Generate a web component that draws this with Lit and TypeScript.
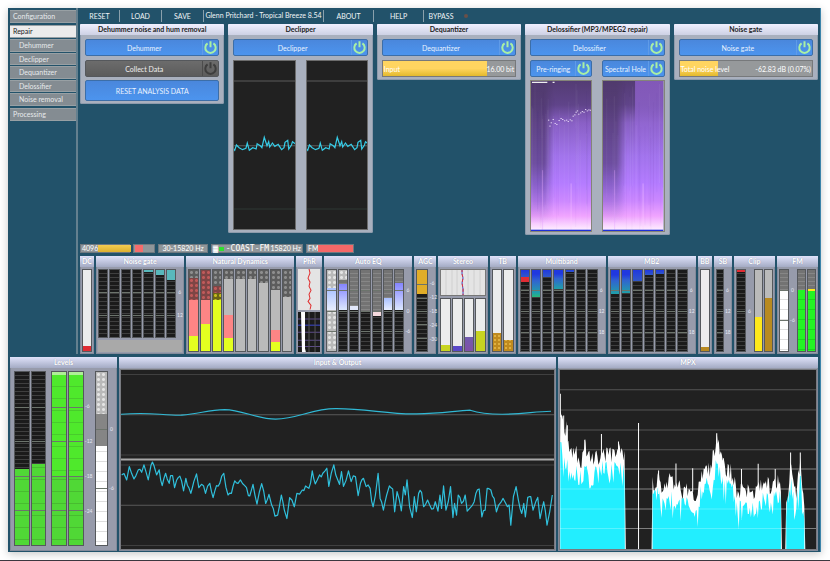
import { LitElement, html, svg, css, nothing } from "lit";
import { customElement, property } from "lit/decorators.js";
import { classMap } from "lit/directives/class-map.js";
import { styleMap } from "lit/directives/style-map.js";

type Seg = [kind: string, until: number];
type Pt = [number, number];

/** A column: base fill plus segments stacked from the top, each ending at a percentage. */
interface Column { base: string; segs?: Seg[]; grow?: number; gap?: boolean }

const line = (pts: Pt[]) => pts.map((p) => p.map((n) => Math.round(n * 10) / 10).join(",")).join(" ");

/** Small deterministic generator, so that the traces are stable between renders. */
function random(seed: number) {
  let s = seed;
  return () => {
    s = (s * 1664525 + 1013904223) % 4294967296;
    return s / 4294967296;
  };
}

@customElement("power-button")
class PowerButton extends LitElement {
  @property() label = "";
  @property({ type: Boolean }) off = false;
  static styles = css`
    :host { display: block; flex: 1; min-width: 0; }
    button {
      display: flex; align-items: center; width: 100%; height: 17px; padding: 0;
      border: 1px solid #3c6ea8; border-radius: 2px;
      background: linear-gradient(#4a87dc, #4c94ee);
      color: #e8f2ff; font: 7px Lato, sans-serif;
    }
    button.off { background: linear-gradient(#6c6c6c, #5c5c5c); border-color: #55585c; color: #f0f0f0; }
    .label { flex: 1; text-align: center; white-space: nowrap; }
    .icon { width: 15px; height: 15px; flex: none; border-left: 1px solid #5f9be8; color: #a9f0a4; }
    .off .icon { color: #3e3e3e; border-color: #4c4c4c; }
  `;
  render() {
    return html`<button class=${classMap({ off: this.off })} aria-pressed=${this.off ? "false" : "true"}>
      <span class="label">${this.label}</span>
      <svg class="icon" viewBox="0 0 15 15" fill="none" stroke="currentColor" stroke-width="2" aria-hidden="true">
        <path d="M4.6 3.4A5.2 5.2 0 1 0 10.4 3.4M7.5 1.2V7.2" />
      </svg>
    </button>`;
  }
}

@customElement("tool-panel")
class ToolPanel extends LitElement {
  @property() heading = "";
  static styles = css`
    :host { display: block; min-width: 0; background: #a9b0be; border-radius: 2px; box-shadow: inset 0 0 0 1px #8d9bac; }
    h2 {
      margin: 0; height: 11px; font: bold 7px/11px "Noto Sans", sans-serif; color: #1c1c22;
      font-family: Lato, sans-serif;
      text-align: center; white-space: nowrap; overflow: hidden;
      background: linear-gradient(#f0f0ff, #cdd1e4); border-radius: 1px 1px 0 0;
    }
    .body { display: flex; flex-direction: column; gap: 3px; padding: 4px 5px 3px; }
  `;
  render() {
    return html`<h2>${this.heading}</h2><div class="body"><slot></slot></div>`;
  }
}

@customElement("value-bar")
class ValueBar extends LitElement {
  @property() label = "";
  @property() value = "";
  @property({ type: Number }) level = 0;
  static styles = css`
    :host { display: block; margin-top: 1px; }
    .bar {
      display: flex; align-items: center; justify-content: space-between; height: 15px; padding: 0 1px;
      border: 1px solid #77797b; background: #96999b; position: relative;
      color: #fff; font: 7px Lato, sans-serif;
    }
    .fill { position: absolute; left: 0; top: 0; bottom: 0; background: linear-gradient(#ffd560 50%, #e3b92d); }
    span { position: relative; white-space: nowrap; }
  `;
  render() {
    return html`<div class="bar" role="meter" aria-label=${this.label} aria-valuenow=${this.level}>
      <div class="fill" style=${styleMap({ width: `${this.level}%` })}></div>
      <span>${this.label}</span><span>${this.value}</span>
    </div>`;
  }
}

@customElement("meter-columns")
class MeterColumns extends LitElement {
  @property({ attribute: false }) columns: Column[] = [];
  @property({ attribute: false }) marks: [string, number][] = [];
  static styles = css`
    :host { display: flex; flex: 1; gap: 1px; min-width: 0; min-height: 0; }
    .col {
      flex: 1 1 0; min-width: 0; display: flex; flex-direction: column; position: relative;
      border: 1px solid #55585c; overflow: hidden;
    }
    .col.gap { margin-right: 4px; }
    .seg { flex: none; }
    .dark { background: repeating-linear-gradient(#1b1b1b 0 3px, #3f3f3f 3px 4px); }
    .ticks { background: repeating-linear-gradient(#737373 0 3px, #868686 3px 4px); }
    .light { background: #ececec; }
    .plain { background: #bababa; }
    .mid { background: #858585; }
    .white { background: repeating-linear-gradient(#fff 0 9px, #dedede 9px 10px); }
    .dots { background: #5d5d5d radial-gradient(circle, #8e8e8e 1px, #8e8e8e00 2px) 0 0 / 5px 5px; }
    .palesdots { background: #b9b9b9 radial-gradient(circle, #e4e4e4 1px, #e4e4e400 2px) 0 0 / 5px 5px; }
    .reddots { background: #7e4545 radial-gradient(circle, #c05a5a 1px, #c05a5a00 2px) 0 0 / 5px 5px; }
    .yellowdots { background: #6a6416 radial-gradient(circle, #c4bb20 1px, #c4bb2000 2px) 0 0 / 5px 5px; }
    .pink { background: #fd8585; }
    .yellow { background: #e4ff20; }
    .gold { background: #e0ad28; }
    .sun { background: #ffe81c; }
    .brown { background: #b88a20; }
    .amber { background: #c08a1e radial-gradient(circle, #e0b040 0 1px, #e0b04000 1px) 0 0 / 4px 4px; }
    .olive { background: #c8d420; }
    .violet { background: #5a48c8; }
    .indigo { background: linear-gradient(#4a78c0, #8050a8); }
    .sky { background: linear-gradient(#a8c0ff, #e8eeff); }
    .lilac { background: linear-gradient(#8484ff, #dce8ff); }
    .ice { background: #e2e8fb; }
    .rose { background: #f4d8dc; }
    .blue { background: linear-gradient(#2038e0, #3058c8); }
    .deep { background: linear-gradient(#2038e0 20%, #3064d0 45%, #20a0a8); }
    .sea { background: linear-gradient(#2038e0 15%, #3064d0 40%, #20a0a8 85%, #28b878); }
    .teal { background: #58b8bc; }
    .red { background: #e02c34; }
    .neon { background: repeating-linear-gradient(#24f424 0 9px, #18d818 9px 10px); }
    .green { background: repeating-linear-gradient(#4fe92c 0 11px, #48cc2c 11px 12px); }
    .greenlow { background: repeating-linear-gradient(#50d836 0 11px, #48bc30 11px 12px); }
    .cap { background: #b0ee98; }
    .mark { position: absolute; left: 0; right: 0; height: 1px; background: #6c746c; }
    .scale { flex: none; width: 5px; position: relative; color: #e6e8f4; font: 5px/6px Lato, sans-serif; text-align: center; }
    .scale span { position: absolute; left: 0; right: 0; transform: translateY(-50%); }
  `;
  render() {
    return html`${this.columns.map((c) => {
      let top = 0;
      return html`<div class=${"col " + c.base + (c.gap ? " gap" : "")} style=${c.grow ? styleMap({ flexGrow: c.grow }) : nothing}>
        ${(c.segs ?? []).map(([kind, until]) => {
          const height = `${until - top}%`;
          top = until;
          return html`<div class=${"seg " + kind} style=${styleMap({ height })}></div>`;
        })}
        ${this.marks.map(([, at]) => html`<div class="mark" style=${styleMap({ top: `${at}%` })}></div>`)}
      </div>`;
    })}
    ${this.marks.length
      ? html`<div class="scale">${this.marks.map(([t, at]) => html`<span style=${styleMap({ top: `${at}%` })}>${t}</span>`)}</div>`
      : nothing}`;
  }
}

@customElement("meter-panel")
class MeterPanel extends LitElement {
  @property() heading = "";
  static styles = css`
    :host { display: flex; flex-direction: column; min-width: 0; background: #979bab; box-shadow: inset 0 0 0 1px #838a9a; }
    h2 {
      margin: 0; height: 11px; flex: none; font: bold 7px/11px Lato, sans-serif; color: #fff; text-align: center;
      white-space: nowrap; overflow: hidden; text-shadow: 0 0 1px #8088a0;
      background: linear-gradient(#dfe2fa, #a4abc4);
    }
    .body { display: flex; flex: 1; flex-direction: column; gap: 2px; padding: 2px; min-height: 0; }
  `;
  render() {
    return html`<h2>${this.heading}</h2><div class="body"><slot></slot></div>`;
  }
}

const dark: Column = { base: "dark" };
const gateColumns: Column[] = [
  dark, dark, dark, dark,
  { base: "dark", segs: [["teal", 3]] },
  { base: "dark", segs: [["teal", 7]] },
  { base: "dark", segs: [["teal", 15]] },
];
const dynamicsColumns: Column[] = [
  { base: "yellow", segs: [["dots", 10], ["reddots", 37], ["pink", 81]] },
  { base: "yellow", segs: [["reddots", 37], ["pink", 67]] },
  { base: "yellow", segs: [["dots", 20], ["reddots", 28], ["yellowdots", 37]] },
  { base: "yellow", segs: [["dots", 11], ["plain", 56], ["pink", 84]] },
  { base: "plain", segs: [["dots", 11]] },
  { base: "plain", segs: [["dots", 11]] },
  { base: "plain", segs: [["dots", 16]] },
  { base: "yellow", segs: [["dots", 25], ["plain", 74], ["pink", 89]] },
  { base: "plain", segs: [["dots", 33]] },
];
const eqColumns: Column[] = [
  { base: "palesdots", segs: [["palesdots", 22], ["sky", 50]] },
  { base: "dark", segs: [["palesdots", 12], ["ticks", 17], ["lilac", 50]] },
  { base: "dark", segs: [["ticks", 45], ["ice", 50]] },
  { base: "dark", segs: [["ticks", 50], ["light", 52]] },
  { base: "dark", segs: [["ticks", 50], ["rose", 57]] },
  { base: "dark", segs: [["ticks", 35], ["sky", 50]] },
  { base: "dark", segs: [["ticks", 16], ["lilac", 50]] },
];
const stereoColumns: Column[] = [
  { base: "olive", segs: [["light", 89]] },
  { base: "violet", segs: [["light", 90]] },
  { base: "indigo", segs: [["light", 73]] },
  { base: "olive", segs: [["light", 61]] },
];
const multibandColumns: Column[] = [
  { base: "dark", segs: [["blue", 9], ["red", 15]] },
  { base: "dark", segs: [["sea", 33]] },
  { base: "dark", segs: [["blue", 9]] },
  { base: "dark", segs: [["deep", 23]] },
  { base: "dark", segs: [["blue", 3]] },
  dark, dark,
];
const mb2Columns: Column[] = [
  { base: "dark", segs: [["deep", 30]] },
  { base: "dark", segs: [["deep", 28]] },
  { base: "dark", segs: [["blue", 13]] },
  { base: "dark", segs: [["blue", 6]] },
  { base: "dark", segs: [["blue", 5]] },
  dark, dark,
];
const clipMain: Column[] = [{ base: "dark", segs: [["red", 3]] }];
const clipSide: Column[] = [
  { base: "sun", segs: [["plain", 58]] },
  { base: "brown", segs: [["plain", 34]] },
];
const fmMain: Column[] = [{ base: "white", segs: [["ticks", 25]] }];
const fmSide: Column[] = [
  { base: "neon", segs: [["ticks", 25]] },
  { base: "neon", segs: [["ticks", 23], ["sun", 26]] },
];
const levelColumns: Column[] = [
  { base: "greenlow", segs: [["dark", 56]] },
  { base: "greenlow", segs: [["dark", 53]], gap: true },
  { base: "greenlow", segs: [["cap", 2], ["green", 60]] },
  { base: "greenlow", segs: [["cap", 2], ["green", 60]] },
];
const outColumns: Column[] = [{ base: "white", segs: [["palesdots", 24], ["mid", 43]] }];

/* Trace of the declipper scope, box spans x 42-225 and y -195-315. */
const clipTrace: Pt[] = [
  [42, 70], [47, 76], [52, 60], [60, 68], [70, 74], [80, 70], [84, 54], [90, 76], [100, 68], [110, 72], [113, 56],
  [122, 62], [127, 68], [134, 37], [142, 62], [147, 50], [150, 66], [158, 54], [165, 64], [175, 58], [185, 74],
  [192, 68], [195, 52], [203, 46], [206, 72], [214, 60], [217, 50], [225, 56],
];

const inputPath =
  "M121 413 Q140 411.5 160 413 T182 413.8 C200 412.6 208 408.6 225 408.4 C242 408.6 258 417.8 276 417.8 " +
  "C298 417.8 312 407.4 336 407.4 C366 407.2 386 412.6 414 412.6 C440 413 455 409.6 471 409 " +
  "C480 412 490 413 503 413 C525 413 535 410.2 552 410";

const outA: Pt[] = [
  [365, 370], [372, 366], [380, 385], [388, 345], [395, 366], [402, 382], [408, 372], [415, 355], [425, 362], [432, 340],
  [438, 360], [445, 385], [453, 342], [462, 342], [470, 370], [478, 355], [487, 402], [497, 365], [502, 382], [508, 395],
  [512, 372], [518, 372], [524, 408], [530, 386], [535, 378], [545, 388], [551, 418], [558, 380], [567, 408], [573, 425],
  [582, 390], [590, 367], [597, 408], [605, 398], [617, 425], [630, 395], [640, 438], [650, 402], [660, 395], [672, 365],
  [685, 430], [695, 425], [705, 388], [715, 395], [722, 385], [735, 402], [746, 432],
];
const outB: Pt[] = [
  [0, 433], [10, 398], [22, 457], [36, 396], [48, 455], [58, 428], [66, 460], [76, 493], [84, 490], [95, 430], [104, 475],
  [112, 500], [120, 438], [134, 465], [142, 425], [158, 415], [168, 403], [178, 410], [188, 358], [197, 397], [203, 385],
  [210, 370], [220, 365], [232, 350], [238, 404], [253, 340], [265, 385], [270, 398], [276, 360], [282, 404], [297, 358],
  [305, 390], [318, 375], [326, 432], [333, 395], [342, 380], [350, 405], [362, 410], [371, 465], [378, 430], [386, 365],
  [392, 440], [402, 475], [412, 430], [420, 403], [430, 412], [436, 480], [443, 420], [450, 445], [456, 477], [463, 405],
  [468, 430], [473, 385], [481, 465], [489, 497], [495, 435], [501, 480], [508, 425], [517, 422], [523, 465], [535, 445],
  [547, 472], [558, 450], [566, 478], [572, 430], [577, 470], [583, 403], [590, 475], [597, 450], [604, 405], [611, 497],
  [616, 455], [622, 490], [627, 430], [637, 455], [648, 430], [654, 478], [670, 460], [680, 425], [690, 412], [698, 495],
  [708, 475], [714, 410], [725, 415], [735, 440], [742, 480], [755, 452], [762, 440], [770, 455], [780, 460], [785, 520],
  [793, 435], [801, 405], [808, 445], [818, 485], [824, 455], [829, 495], [836, 437], [845, 435], [852, 475], [860, 450],
  [866, 437], [873, 500], [884, 450], [894, 520], [902, 480], [910, 430],
];

/** Adds a jittered point in the wider steps of a trace. */
function roughen(pts: Pt[], amount: number): Pt[] {
  const rnd = random(19);
  return pts.flatMap((p, i): Pt[] => {
    const n = pts[i + 1];
    if (!n || n[0] - p[0] < 3) return [p];
    return [p, [(p[0] + n[0]) / 2, (p[1] + n[1]) / 2 + (rnd() - 0.5) * amount]];
  });
}
const outTrace = roughen([
  ...outA.map(([x, y]): Pt => [x / 3, 350 + y / 3]),
  ...outB.map(([x, y]): Pt => [250 + x / 3, 350 + y / 3]),
], 7);

/* Spectrum bands: x, mean peak, mean average level. */
const bands: [number, number, number][][] = [
  [[64, 150, 250], [70, 210, 320], [82, 235, 330], [92, 300, 365], [102, 300, 365], [114, 308, 370], [126, 340, 378],
   [137, 280, 350], [150, 322, 385], [165, 318, 372], [180, 315, 368], [192, 305, 352], [215, 308, 355], [238, 295, 355], [257, 310, 362]],
  [[340, 398, 425], [350, 402, 430], [358, 380, 425], [372, 412, 465], [390, 385, 435], [410, 392, 445], [430, 420, 460],
   [450, 408, 445], [470, 440, 495], [482, 392, 435], [496, 360, 402], [512, 356, 408], [525, 300, 365], [532, 258, 325],
   [541, 300, 360], [555, 352, 412], [572, 355, 388], [584, 385, 436], [596, 440, 484], [608, 392, 442], [630, 428, 472],
   [650, 412, 462], [675, 388, 440], [695, 408, 455], [710, 384, 432], [724, 400, 440]],
  [[740, 460, 480], [747, 400, 430], [753, 320, 375], [758, 380, 430], [768, 430, 470], [776, 380, 420], [782, 320, 370],
   [788, 390, 430], [794, 450, 490]],
];
const spikes: Pt[] = [[64, 128], [74, 193], [85, 222], [137, 265], [187, 248], [238, 270], [298, 215], [358, 357], [410, 336],
  [460, 350], [532, 246], [552, 320], [606, 352], [656, 337], [707, 352], [753, 303], [782, 303]];

function spectrum() {
  const rnd = random(41);
  return bands.map((keys) => {
    const peak: Pt[] = [];
    const low: Pt[] = [];
    const end = keys[keys.length - 1][0];
    let i = 0;
    for (let x = keys[0][0]; x <= end; x += 3) {
      while (i < keys.length - 2 && keys[i + 1][0] < x) i++;
      const [x0, p0, l0] = keys[i];
      const [x1, p1, l1] = keys[i + 1];
      const t = (x - x0) / (x1 - x0);
      const dip = rnd() > 0.8 ? 36 : 0;
      peak.push([x, p0 + (p1 - p0) * t + (rnd() - 0.5) * 52]);
      low.push([x, l0 + (l1 - l0) * t + (rnd() - 0.5) * 56 + dip]);
    }
    const from = keys[0][0];
    return svg`
      <polygon fill="#fff" points=${`${from - 3},591 ${line(peak)} ${end + 3},591`} />
      <polygon fill="#22eeff" points=${`${from},591 ${line(low)} ${end},591`} />`;
  });
}

function spectrogram(id: string, holes: boolean) {
  const rnd = random(holes ? 7 : 3);
  const streaks = Array.from({ length: 34 }, () => [rnd() * 184, rnd() * 180, rnd()]);
  const sparks: Pt[] = [[52, 120], [56, 138], [60, 128], [66, 118], [72, 130], [77, 133], [84, 121], [90, 115], [95, 118], [101, 122],
    [107, 120], [112, 124], [118, 119], [123, 122], [127, 108], [132, 104], [136, 96], [140, 92], [144, 102], [150, 98], [155, 94],
    [160, 96], [165, 88], [170, 92], [175, 89], [180, 90]];
  return html`<svg class="gram" viewBox="0 0 184 454" preserveAspectRatio="none" role="img" aria-label=${holes ? "Spectral hole" : "Pre-ringing"}>
    <defs>
      <linearGradient id=${id + "a"} x1="0" y1="0" x2="0" y2="1">
        <stop offset="0" stop-color="#543c74" /><stop offset=".16" stop-color="#60448a" /><stop offset=".28" stop-color="#8860c4" />
        <stop offset=".5" stop-color="#a274ec" /><stop offset=".68" stop-color="#b47cff" /><stop offset=".8" stop-color="#cc88ff" />
        <stop offset=".9" stop-color="#f0a4ff" /><stop offset="1" stop-color="#fff4ff" />
      </linearGradient>
      <linearGradient id=${id + "b"} x1="0" y1="0" x2="0" y2="1">
        <stop offset="0" stop-color="#503a6c" stop-opacity=".9" /><stop offset=".55" stop-color="#5a4084" stop-opacity=".75" />
        <stop offset=".8" stop-color="#6048a0" stop-opacity=".3" /><stop offset=".95" stop-color="#6048a0" stop-opacity="0" />
      </linearGradient>
      <linearGradient id=${id + "c"} x1="0" y1="0" x2="0" y2="1">
        <stop offset="0" stop-color="#8258b8" /><stop offset="1" stop-color="#a878f4" stop-opacity=".3" />
      </linearGradient>
      <linearGradient id=${id + "d"} x1="0" y1="0" x2="1" y2="0">
        <stop offset="0" stop-color="#fff" /><stop offset=".6" stop-color="#fff" /><stop offset="1" stop-color="#000" />
      </linearGradient>
      <mask id=${id + "m"}><rect width="70" height="454" fill=${`url(#${id}d)`} /></mask>
    </defs>
    <rect width="184" height="454" fill=${`url(#${id}a)`} />
    ${holes
      ? svg`<rect x="98" width="86" height="240" fill=${`url(#${id}c)`} />`
      : svg`<polygon points="130,104 184,86 184,240 130,240" fill=${`url(#${id}c)`} opacity=".5" />`}
    <rect width="70" height="454" fill=${`url(#${id}b)`} mask=${`url(#${id}m)`} />
    ${streaks.map(([x, y, o]) => svg`<rect x=${x.toFixed(0)} y=${y.toFixed(0)} width="3" height="300"
      fill=${o > 0.5 ? "#fff" : "#402070"} opacity=${(0.02 + o * 0.04).toFixed(2)} />`)}
    <rect x="34" y="270" width="3" height="180" fill="#e0a0ff" opacity=".4" />
    <rect x="121" y="310" width="3" height="140" fill="#ffd0ff" opacity=".4" />
    ${holes ? nothing : svg`<path d="M3 4H50M66 4H72" stroke="#eee" stroke-width="4" />
      ${sparks.map(([x, y]) => svg`<rect x=${x} y=${y - 3} width="4" height="3" fill="#e4d4f4" />`)}`}
    <rect y="450" width="184" height="4" fill="#2030d8" />
  </svg>`;
}

const scope = () => html`<svg class="scope" viewBox="42 -195 183 510" preserveAspectRatio="none" role="img" aria-label="Waveform">
  <path d="M42 -132H225M42 62H225" stroke="#5c5c5c" stroke-width="3" />
  <path d="M42 252H225" stroke="#2e3835" stroke-width="3" />
  <polyline points=${line(clipTrace)} fill="none" stroke="#36cbe6" stroke-width="3.6" />
</svg>`;

@customElement("app-root")
class AppRoot extends LitElement {
  static styles = css`
    :host {
      display: flex; flex-direction: column; min-height: 100vh; box-sizing: border-box; padding-top: 8px;
      background: #fff; font: 7px Lato, sans-serif; border-bottom: 1px solid #3c3840;
    }
    .window { margin: 0 9px 8px 8px; background: #22526a; box-shadow: inset -1px 0 #3c84aa, 0 2px 8px #00000038; padding: 0 3px 1px 2px; }
    .upper { display: flex; }
    .side { width: 66px; flex: none; display: flex; flex-direction: column; gap: 2px; padding-top: 2px; }
    .side a {
      display: block; height: 13px; box-sizing: border-box; padding-left: 3px; overflow: hidden; border: 1px solid #98a0a4; border-width: 1px 0;
      background: #848c92; color: #e6eaec; text-decoration: none; font: 7px/11px Lato, sans-serif; white-space: nowrap;
    }
    .side a.current { background: #ececec; color: #222; }
    .side .subs { display: grid; grid-auto-rows: 1fr; gap: 1px; height: 67px; margin-top: -1px; }
    .side .subs a { height: auto; padding-left: 9px; }
    .work { flex: 1; min-width: 0; border-left: 2px solid #64808f; padding-left: 2px; }
    .menu { display: flex; align-items: center; height: 16px; }
    .menu button, .menu span {
      box-sizing: border-box; height: 12px; padding: 0; border: 0; border-right: 1px solid #8aa0ac; background: none;
      color: #f0f4f6; font: 7px/11px Lato, sans-serif; text-align: center; white-space: nowrap;
    }
    .menu button { width: 42px; }
    .menu button:first-child { width: 40px; }
    .menu .preset { width: 120px; }
    .menu .wide { width: 50px; }
    .menu button:last-of-type { width: 34px; border: 0; }
    .menu i { width: 4px; height: 4px; border-radius: 50%; background: #6a5048; margin-left: 6px; }
    .tools { display: grid; grid-template-columns: repeat(5, minmax(0, 1fr)); gap: 4px; align-items: start; height: 220px; }
    .plain {
      height: 21px; padding: 0; border: 1px solid #3c6ea8; border-radius: 2px; background: linear-gradient(#4a87dc, #4c94ee);
      color: #e8f2ff; font: 7px Lato, sans-serif;
    }
    .row { display: flex; gap: 10px; }
    .below { margin-top: 1px; }
    .scope, .gram { display: block; flex: 1; min-width: 0; width: 0; box-sizing: border-box; }
    .scope { height: 170px; background: #212121; outline: 1px solid #6c6c6c; outline-offset: -1px; }
    .gram { height: 152px; border: 1px solid #848478; }
    .status { display: flex; gap: 3px; height: 9px; }
    .status div {
      display: flex; align-items: center; justify-content: space-between; box-sizing: border-box; height: 9px; padding: 0 1px;
      border: 1px solid #6e7880; background: #90969a; color: #fff; font: 7px/7px Lato, sans-serif; white-space: nowrap;
    }
    .status b { height: 7px; flex: none; }
    .status .buffer { width: 50px; padding-right: 0; }
    .status .buffer b { width: 33px; background: linear-gradient(#f4cc50, #dcb030); }
    .status .load { width: 22px; }
    .status .load b { width: 8px; background: #f46c6c; }
    .status .range { width: 50px; justify-content: center; }
    .status .station { width: 92px; }
    .status .station b { width: 5px; height: 4px; background: #30e030; }
    .status .station strong { font: 8px/7px "DejaVu Sans Mono", monospace; }
    .status .fm { width: 48px; padding-right: 0; }
    .status .fm b { width: 35px; background: #f46868; }
    .meters {
      display: grid; gap: 2px; height: 98px; margin-top: 3px;
      grid-template-columns: 14fr 88fr 108fr 26fr 88fr 22fr 49fr 26fr 88fr 88fr 14fr 18fr 41fr 41fr;
    }
    .meters > * { min-width: 0; }
    .side-by-side { display: flex; flex: 1; gap: 2px; min-height: 0; }
    .note { height: 12px; flex: none; background: #a9a9a9; }
    .phase, .phase-plot, .pan { display: block; width: 100%; flex: 1 1 0; min-height: 0; }
    .phase, .pan { background: #e4e4e4; }
    .pan { flex: none; height: 27px; outline: 1px solid #777; outline-offset: -1px; }
    .phase-plot { background: #1b1b1b; }
    .narrow { flex: 0 0 19px; }
    .bottom { display: grid; grid-template-columns: 107fr 437fr 260fr; gap: 2px; height: 194px; margin-top: 3px; }
    .graph { display: block; width: 100%; flex: 1; min-height: 0; background: #212121; outline: 1px solid #787a80; }
    .levels { display: flex; flex: 1; gap: 5px; padding: 1px 1px 3px 2px; min-height: 0; }
    .levels .main { flex: 79; }
    .levels .out { flex: 20; }
  `;

  render() {
    return html`
      <main class="window">
        <div class="upper">
          <nav class="side">
            <a href="#configuration">Configuration</a>
            <a href="#repair" class="current">Repair</a>
            <div class="subs">
              ${["Dehummer", "Declipper", "Dequantizer", "Delossifier", "Noise removal"].map((t) => html`<a href="#tools">${t}</a>`)}
            </div>
            <a href="#processing">Processing</a>
          </nav>
          <div class="work">
            <div class="menu">
              <button>RESET</button><button>LOAD</button><button>SAVE</button>
              <span class="preset">Glenn Pritchard - Tropical Breeze 8.54</span>
              <button class="wide">ABOUT</button><button class="wide">HELP</button><button>BYPASS</button><i></i>
            </div>
            <div class="tools">
              <tool-panel heading="Dehummer noise and hum removal">
                <power-button label="Dehummer"></power-button>
                <power-button class="below" label="Collect Data" off></power-button>
                <button class="plain">RESET ANALYSIS DATA</button>
              </tool-panel>
              <tool-panel heading="Declipper">
                <power-button label="Declipper"></power-button>
                <div class="row below">${scope()}${scope()}</div>
              </tool-panel>
              <tool-panel heading="Dequantizer">
                <power-button label="Dequantizer"></power-button>
                <value-bar label="Input" value="16.00 bit" level="79"></value-bar>
              </tool-panel>
              <tool-panel heading="Delossifier (MP3/MPEG2 repair)">
                <power-button label="Delossifier"></power-button>
                <div class="row below">
                  <power-button label="Pre-ringing"></power-button>
                  <power-button label="Spectral Hole"></power-button>
                </div>
                <div class="row">${spectrogram("p", false)}${spectrogram("s", true)}</div>
              </tool-panel>
              <tool-panel heading="Noise gate">
                <power-button label="Noise gate"></power-button>
                <value-bar label="Total noise level" value="-62.83 dB (0.07%)" level="29"></value-bar>
              </tool-panel>
            </div>
            <div class="status">
              <div class="buffer">4096<b></b></div>
              <div class="load"><b></b></div>
              <div class="range">30-15820 Hz</div>
              <div class="station"><span>▓</span><b></b><strong>-COAST-FM</strong><span>15820 Hz</span></div>
              <div class="fm">FM<b></b></div>
            </div>
            <div class="meters">
              <meter-panel heading="DC"><meter-columns .columns=${[{ base: "red", segs: [["light", 94]] }]}></meter-columns></meter-panel>
              <meter-panel heading="Noise gate">
                <meter-columns .columns=${gateColumns} .marks=${[["6", 33], ["12", 67]]}></meter-columns>
                <div class="note"></div>
              </meter-panel>
              <meter-panel heading="Natural Dynamics"><meter-columns .columns=${dynamicsColumns}></meter-columns></meter-panel>
              <meter-panel heading="PhR">
                <svg class="phase" viewBox="0 0 22 40" preserveAspectRatio="none" aria-hidden="true">
                  <path d="M11 0L12 4L10 9L12 13L11 17L13 21L11 25L12 29L10 32L13 36L12 40" fill="none" stroke="#e03030" />
                </svg>
                <svg class="phase-plot" viewBox="0 0 22 40" preserveAspectRatio="none" aria-hidden="true">
                  <path d="M0 7H22M0 20H22M0 28H22M0 34H22" stroke="#5c4c88" /><path d="M0 13H22" stroke="#3c48d0" />
                  <path d="M11 0V40M17 0V40" stroke="#555" /><path d="M3 0H7V36L8 40H4Z" fill="#fff" />
                </svg>
              </meter-panel>
              <meter-panel heading="Auto EQ"><meter-columns .columns=${eqColumns} .marks=${[["6", 25], ["0", 50], ["-6", 75]]}></meter-columns></meter-panel>
              <meter-panel heading="AGC"><meter-columns .columns=${[{ base: "dark", segs: [["gold", 30]] }]} .marks=${[["-6", 17], ["-12", 34], ["-18", 50], ["-24", 67], ["-30", 84]]}></meter-columns></meter-panel>
              <meter-panel heading="Stereo">
                <svg class="pan" viewBox="0 0 45 27" preserveAspectRatio="none" aria-hidden="true">
                  <path d="M6 0V27M12 0V27M17 0V27M28 0V27M34 0V27M40 0V27" stroke="#d0d0d0" />
                  <path d="M22 0V5L23 9L22 14L23 20V27" fill="none" stroke="#4048c0" />
                  <path d="M22 0V5L23 9L22 14L23 20V27" fill="none" stroke="#e03040" stroke-dasharray="3 2" />
                </svg>
                <meter-columns .columns=${stereoColumns}></meter-columns>
              </meter-panel>
              <meter-panel heading="TB"><meter-columns .columns=${[{ base: "amber", segs: [["light", 78]] }, { base: "amber", segs: [["light", 86]] }]}></meter-columns></meter-panel>
              <meter-panel heading="Multiband"><meter-columns .columns=${multibandColumns} .marks=${[["6", 25], ["12", 51], ["18", 76]]}></meter-columns></meter-panel>
              <meter-panel heading="MB2"><meter-columns .columns=${mb2Columns} .marks=${[["6", 25], ["12", 51], ["18", 76]]}></meter-columns></meter-panel>
              <meter-panel heading="BB"><meter-columns .columns=${[{ base: "brown", segs: [["light", 95]] }]}></meter-columns></meter-panel>
              <meter-panel heading="SB"><meter-columns .columns=${[dark]} .marks=${[["6", 25], ["12", 51], ["18", 76]]}></meter-columns></meter-panel>
              <meter-panel heading="Clip">
                <div class="side-by-side">
                  <meter-columns .columns=${clipMain} .marks=${[["6", 51]]}></meter-columns>
                  <meter-columns class="narrow" .columns=${clipSide}></meter-columns>
                </div>
              </meter-panel>
              <meter-panel heading="FM">
                <div class="side-by-side">
                  <meter-columns .columns=${fmMain} .marks=${[["0", 25], ["-6", 62]]}></meter-columns>
                  <meter-columns class="narrow" .columns=${fmSide}></meter-columns>
                </div>
              </meter-panel>
            </div>
          </div>
        </div>
        <div class="bottom">
          <meter-panel heading="Levels">
            <div class="levels">
              <meter-columns class="main" .columns=${levelColumns} .marks=${[["-6", 20], ["-12", 40], ["-18", 60], ["-24", 80]]}></meter-columns>
              <meter-columns class="out" .columns=${outColumns} .marks=${[["0", 33], ["-6", 67]]}></meter-columns>
            </div>
          </meter-panel>
          <meter-panel heading="Input &amp; Output">
            <svg class="graph" viewBox="121 369 434 178" preserveAspectRatio="none" role="img" aria-label="Input and output waveforms">
              <path d="M121 373.5H555M121 453.5H555M121 463.5H555M121 543.5H555" stroke="#404040" />
              <path d="M121 413.5H555M121 503.5H555" stroke="#5a5a5a" />
              <path d="M121 458H555" stroke="#a8a8a8" stroke-width="2" />
              <path d=${inputPath} fill="none" stroke="#30b8d4" stroke-width="1.2" />
              <polyline points=${line(outTrace)} fill="none" stroke="#30c0dc" stroke-width="1.2" stroke-linejoin="round" />
            </svg>
          </meter-panel>
          <meter-panel heading="MPX">
            <svg class="graph" viewBox="63 57 766 534" preserveAspectRatio="none" role="img" aria-label="MPX spectrum">
              ${[116, 176, 236, 295, 352, 412, 472, 530].map((y) => svg`<path d=${`M63 ${y}H829`} stroke="#555" stroke-width="3" />`)}
              ${spectrum()}
              ${spikes.map(([x, y]) => svg`<path d=${`M${x} ${y}V${x === 298 ? 591 : y + 70}`} stroke="#fff" stroke-width="3" />`)}
              ${[352, 412, 472, 530].map((y) => svg`<path d=${`M63 ${y}H829`} stroke="#fff" stroke-opacity=".25" stroke-width="3" />`)}
            </svg>
          </meter-panel>
        </div>
      </main>
    `;
  }
}
